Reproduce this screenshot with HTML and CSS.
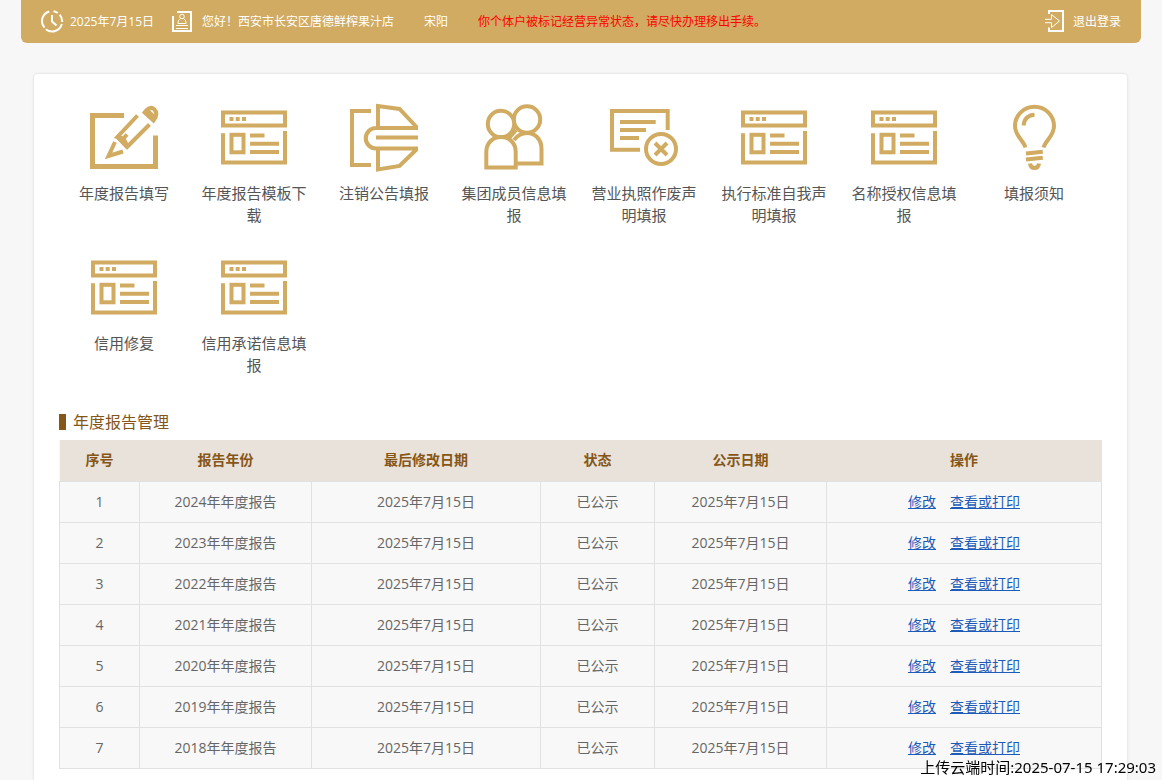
FILE: index.html
```html
<!DOCTYPE html>
<html lang="zh-CN">
<head>
    <meta charset="UTF-8">
    <meta name="viewport" content="width=device-width, initial-scale=1.0">
    <title>年度报告管理</title>
    <link rel="stylesheet" href="styles.css">
</head>
<body>
    <svg class="symbols" aria-hidden="true">
        <symbol id="icon-window" viewBox="0 0 70 70">
            <rect x="4" y="9.5" width="62" height="13"/>
            <path d="M10.5 16h4M16.7 16h4M23 16h4M4 30.3V59.5H66V28"/>
            <rect x="12.5" y="31.8" width="12" height="17.5"/>
            <path d="M31 32.5h14.5M31 40.7h29M31 49h29"/>
        </symbol>
    </svg>

    <div class="wrap">
        <header class="topbar">
            <svg class="top-icon" viewBox="0 0 24 24">
                <path d="M9.2 1.5A10 10 0 0 0 4.5 17.7M5.8 19.2A10 10 0 0 0 21.8 14M22.2 12A10 10 0 0 0 19.6 4.6M17.8 3A10 10 0 0 0 13.5 1.2"/>
                <path d="M12 5V11.5L16.5 15.5"/>
            </svg>
            <span class="date">2025年7月15日</span>
            <svg class="top-icon" viewBox="2 0 24 24">
                <path d="M7 2H21V21H3V6"/>
                <g class="thin">
                    <circle cx="12" cy="6.5" r="2.3"/>
                    <path d="M10.5 8.5C8.5 10 8 11 8 13.5H16C16 11 15.5 10 13.5 8.5M6 15.5H18M6 18.5H18"/>
                </g>
            </svg>
            <span class="shop">您好！西安市长安区唐德鲜榨果汁店</span>
            <span class="user">宋阳</span>
            <span class="warning">你个体户被标记经营异常状态，请尽快办理移出手续。</span>
            <a href="#" class="logout">
                <svg class="top-icon" viewBox="0 0 24 24">
                    <path d="M6 4V1H20V21H6V17.5"/>
                    <path class="thin" d="M2 9.3H8.5V4.5L16.5 11L8.5 17.5V12.7H2"/>
                </svg>
                <span>退出登录</span>
            </a>
        </header>

        <main class="card">
            <nav class="menu">
                <a href="#" class="item">
                    <svg class="icon" viewBox="0 0 70 70">
                        <path class="bold" d="M35 12.5H3.5V63.5H66.5V32.5"/>
                        <path d="M48.5 12.5L28.5 34L34.5 35.5L38.5 43.5L60.5 21.5M28.5 34L38.5 44.5M38 31.5L34 36M26 39L19.5 53L34 48.5"/>
                        <path d="M55.5 9.5C58 5.5 62 3.5 65 6C68 9 68 13 64.5 17.5ZM59 8L65 14"/>
                    </svg>
                    <span>年度报告填写</span>
                </a>
                <a href="#" class="item">
                    <svg class="icon"><use href="#icon-window"/></svg>
                    <span>年度报告模板下载</span>
                </a>
                <a href="#" class="item">
                    <svg class="icon" viewBox="0 0 70 70">
                        <path d="M22 8H3V62H22M69 25H27A10.2 10.2 0 0 0 27 45.5H69M27 34.5H69M29 25V3L50.5 6L68 24.5M29 45.5V66.5L50.5 63L68 46"/>
                    </svg>
                    <span>注销公告填报</span>
                </a>
                <a href="#" class="item">
                    <svg class="icon" viewBox="0 0 70 70">
                        <path d="M38 60.5H62.5V46C62.5 36 56 30 48 30C42 30 38 33 35 37"/>
                        <circle class="cover" cx="48" cy="16.5" r="13.2"/>
                        <path d="M37 27L30 35"/>
                        <circle class="cover" cx="22" cy="21" r="13.2"/>
                        <path class="cover" d="M7.3 64.4V49C7.3 39.5 14 34 22 34S36.7 39.5 36.7 49V64.4Z"/>
                    </svg>
                    <span>集团成员信息填报</span>
                </a>
                <a href="#" class="item">
                    <svg class="icon" viewBox="0 0 70 70">
                        <path d="M58.7 27V8H3V46.7H31M11 19H46.7M11 27H37M11 35H30"/>
                        <circle cx="52" cy="46" r="15"/>
                        <path d="M46 40L58 52M58 40L46 52"/>
                    </svg>
                    <span>营业执照作废声明填报</span>
                </a>
                <a href="#" class="item">
                    <svg class="icon"><use href="#icon-window"/></svg>
                    <span>执行标准自我声明填报</span>
                </a>
                <a href="#" class="item">
                    <svg class="icon"><use href="#icon-window"/></svg>
                    <span>名称授权信息填报</span>
                </a>
                <a href="#" class="item">
                    <svg class="icon" viewBox="0 0 70 70">
                        <path d="M26.5 44.5C24 36.5 16 33 16 23A19.5 19.3 0 0 1 55 23C55 33 47 36.5 44.5 44.5M24.5 22.5Q25.5 12.5 35.5 11.8M27 50.5L43.8 48.8M27 56.5L43.8 54.8M31 60.5Q31.5 65 35.5 65T40 60.5"/>
                    </svg>
                    <span>填报须知</span>
                </a>
                <a href="#" class="item">
                    <svg class="icon"><use href="#icon-window"/></svg>
                    <span>信用修复</span>
                </a>
                <a href="#" class="item">
                    <svg class="icon"><use href="#icon-window"/></svg>
                    <span>信用承诺信息填报</span>
                </a>
            </nav>

            <h2 class="title">年度报告管理</h2>
            <table class="reports">
                <colgroup>
                    <col class="col-no">
                    <col class="col-year">
                    <col class="col-modified">
                    <col class="col-status">
                    <col class="col-public">
                    <col>
                </colgroup>
                <thead>
                    <tr><th>序号</th><th>报告年份</th><th>最后修改日期</th><th>状态</th><th>公示日期</th><th>操作</th></tr>
                </thead>
                <tbody>
                    <tr><td>1</td><td>2024年年度报告</td><td>2025年7月15日</td><td>已公示</td><td>2025年7月15日</td><td><a href="#">修改</a><a href="#">查看或打印</a></td></tr>
                    <tr><td>2</td><td>2023年年度报告</td><td>2025年7月15日</td><td>已公示</td><td>2025年7月15日</td><td><a href="#">修改</a><a href="#">查看或打印</a></td></tr>
                    <tr><td>3</td><td>2022年年度报告</td><td>2025年7月15日</td><td>已公示</td><td>2025年7月15日</td><td><a href="#">修改</a><a href="#">查看或打印</a></td></tr>
                    <tr><td>4</td><td>2021年年度报告</td><td>2025年7月15日</td><td>已公示</td><td>2025年7月15日</td><td><a href="#">修改</a><a href="#">查看或打印</a></td></tr>
                    <tr><td>5</td><td>2020年年度报告</td><td>2025年7月15日</td><td>已公示</td><td>2025年7月15日</td><td><a href="#">修改</a><a href="#">查看或打印</a></td></tr>
                    <tr><td>6</td><td>2019年年度报告</td><td>2025年7月15日</td><td>已公示</td><td>2025年7月15日</td><td><a href="#">修改</a><a href="#">查看或打印</a></td></tr>
                    <tr><td>7</td><td>2018年年度报告</td><td>2025年7月15日</td><td>已公示</td><td>2025年7月15日</td><td><a href="#">修改</a><a href="#">查看或打印</a></td></tr>
                </tbody>
            </table>
        </main>
    </div>

    <div class="upload-time">上传云端时间:2025-07-15 17:29:03</div>
</body>
</html>
```
FILE: styles.css
```css
* {
    box-sizing: border-box;
}

body {
    margin: 0;
    background-color: #f7f7f7;
    color: #555;
    font-family: "Open Sans", "Noto Sans CJK SC", sans-serif;
    font-size: 14px;
}

svg {
    fill: none;
    stroke: #d0ab61;
    stroke-width: 4;
}

.symbols {
    display: none;
}

.wrap {
    display: flex;
    flex-direction: column;
    max-width: 1120px;
    min-height: 100vh;
    margin: 0 auto;
}

/* top bar */
.topbar {
    display: flex;
    align-items: center;
    height: 43px;
    padding: 0 20px 0 19px;
    border-radius: 0 0 6px 6px;
    background-color: #d0ab61;
    color: #fff;
    font-size: 12px;
    line-height: 18px;
    white-space: nowrap;
}

.top-icon {
    flex: none;
    width: 24px;
    height: 24px;
    margin-right: 6px;
    stroke: #fff;
    stroke-width: 2;
}

.thin {
    stroke-width: 1;
}

.date {
    margin-right: 18px;
}

.user {
    margin: 0 30px;
}

.warning {
    color: #f00;
}

.logout {
    display: flex;
    align-items: center;
    margin-left: auto;
    color: #fff;
    text-decoration: none;
}

/* white panel */
.card {
    flex: 1;
    margin: 31px 14px 0 13px;
    padding: 29px 25px 11px;
    border-radius: 4px 4px 0 0;
    background-color: #fff;
    box-shadow: 0 0 3px rgba(0, 0, 0, 0.15);
}

.menu {
    display: grid;
    grid-template-columns: repeat(auto-fill, 130px);
    grid-auto-rows: 150px;
}

.item {
    display: flex;
    flex-direction: column;
    align-items: center;
    padding: 0 10px;
    color: #555;
    font-size: 15px;
    line-height: 22px;
    text-align: center;
    text-decoration: none;
}

.icon {
    flex: none;
    width: 70px;
    height: 70px;
    margin-bottom: 9px;
}

.bold {
    stroke-width: 5;
}

.cover {
    fill: #fff;
}

.title {
    display: flex;
    align-items: center;
    gap: 7px;
    margin: 7px 0 6px;
    color: #855617;
    font-size: 16px;
    font-weight: normal;
    line-height: 24px;
}

.title::before {
    content: "";
    width: 7px;
    height: 16px;
    background-color: #855617;
}

/* report list */
.reports {
    width: 100%;
    table-layout: fixed;
    border-collapse: collapse;
    background-color: #f8f8f8;
    line-height: 20px;
    text-align: center;
}

.reports th,
.reports td {
    height: 41px;
    padding: 0;
}

.reports th {
    background-color: #e9e2db;
    color: #855617;
}

.reports td {
    border: 1px solid #e1e1e1;
    color: #666;
}

.reports a {
    margin: 0 7px;
    color: #1d5bb8;
}

.col-no {
    width: 80px;
}

.col-year,
.col-public {
    width: 172px;
}

.col-modified {
    width: 229px;
}

.col-status {
    width: 114px;
}

.upload-time {
    position: fixed;
    right: 6px;
    bottom: 2px;
    color: #000;
    font-family: "Noto Sans", "Noto Sans CJK SC", sans-serif;
    font-size: 15px;
    line-height: 22px;
}
```
